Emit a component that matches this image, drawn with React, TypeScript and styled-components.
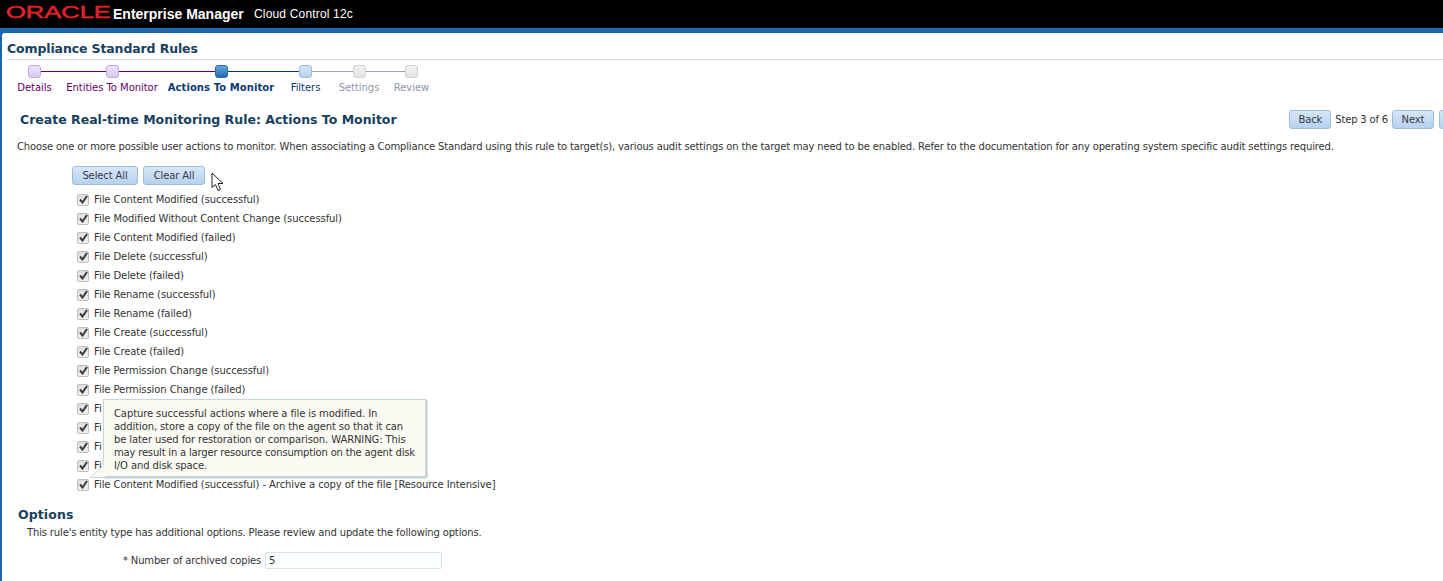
import React from "react";
import styled, { createGlobalStyle } from "styled-components";

const FONT = `"DejaVu Sans", "Noto Sans", sans-serif`;

const Global = createGlobalStyle`
  html, body { margin: 0; padding: 0; background: #fff; overflow: hidden; height: 581px; }
  body { font-family: ${FONT}; font-size: 10px; color: #333; }
`;

const Page = styled.div`
  width: 1443px;
  height: 581px;
  overflow: hidden;
  display: flex;
  flex-direction: column;
`;
const Brand = styled.header`
  height: 28px;
  background: #000;
  display: flex;
  align-items: center;
  padding-left: 6px;
  color: #fff;
  flex: none;
`;
const LogoBox = styled.span`
  width: 107px;
  height: 28px;
  display: flex;
  align-items: center;
  flex: none;
`;
const Logo = styled.span`
  font-family: "Liberation Sans", sans-serif;
  color: #e3202b;
  font-size: 17px;
  line-height: 20px;
  margin-top: -3px;
  transform: scaleX(1.5);
  transform-origin: left center;
  white-space: nowrap;
  -webkit-text-stroke: 0.5px #e3202b;
`;
const Product = styled.span`
  font-family: "Liberation Sans", sans-serif;
  font-weight: 700;
  font-size: 14px;
  width: 141px;
  margin-top: -1px;
`;
const Sub = styled.span`
  font-family: "Liberation Sans", sans-serif;
  font-size: 12px;
  letter-spacing: 0.17px;
  margin-top: -1px;
`;
const Shell = styled.div`
  flex: 1;
  background: #1c66b0;
  padding: 5px 0 0 2px;
  display: flex;
  min-height: 0;
`;
const Panel = styled.main`
  flex: 1;
  background: #fff;
  border-top-left-radius: 3px;
  padding: 0 0 0 5px;
  min-width: 0;
`;
const PageTitle = styled.h1`
  margin: 0;
  height: 24px;
  padding-top: 2px;
  line-height: 27px;
  font-size: 12.5px;
  font-weight: 700;
  letter-spacing: -0.12px;
  color: #17405e;
  border-bottom: 1px solid #d6dde3;
`;
const Train = styled.ol`
  list-style: none;
  margin: 5px 0 0 0;
  padding: 0;
  display: flex;
`;
const Step = styled.li<{ $w: number; $next?: number; $tone: string }>`
  position: relative;
  width: ${(p) => p.$w}px;
  display: flex;
  flex-direction: column;
  align-items: center;
  gap: 3px;
  &::after {
    content: "";
    display: ${(p) => (p.$next ? "block" : "none")};
    position: absolute;
    left: 50%;
    top: 6px;
    height: 1px;
    width: ${(p) => p.$next ?? 0}px;
    background: ${(p) => p.$tone};
  }
`;
const StepBox = styled.span<{ $bg: string; $line: string }>`
  position: relative;
  z-index: 1;
  width: 11px;
  height: 11px;
  border: 1px solid ${(p) => p.$line};
  border-radius: 3px;
  background: ${(p) => p.$bg};
`;
const StepLabel = styled.span<{ $color: string; $bold?: boolean }>`
  color: ${(p) => p.$color};
  font-weight: ${(p) => (p.$bold ? 700 : 400)};
  font-size: 10px;
  line-height: 14px;
  white-space: nowrap;
  letter-spacing: ${(p) => (p.$bold ? "0.08px" : "-0.04px")};
`;
const HeadRow = styled.div`
  display: flex;
  align-items: center;
  margin-top: 12px;
  height: 24px;
  padding-left: 13px;
  width: 1461px;
`;
const SubTitle = styled.h2`
  margin: 0;
  flex: 1;
  font-size: 12.5px;
  font-weight: 700;
  color: #17405e;
`;
const StepOf = styled.span`
  margin: 0 4px 0 4px;
  font-size: 10px;
  letter-spacing: -0.18px;
  color: #333;
`;
const Btn = styled.button<{ $w: number }>`
  width: ${(p) => p.$w}px;
  height: 19px;
  padding: 0;
  border: 1px solid #9ebcd6;
  border-radius: 3px;
  background: linear-gradient(#d6e7f7, #b6d2ee);
  font-family: ${FONT};
  font-size: 10px;
  letter-spacing: -0.12px;
  color: #3a3a4e;
  flex: none;
`;
const Stub = styled(Btn)`
  margin-left: 5px;
`;
const Intro = styled.p`
  margin: 9px 0 0 10px;
  line-height: 14px;
  font-size: 10px;
  letter-spacing: -0.148px;
  white-space: nowrap;
  color: #333;
`;
const Actions = styled.div`
  display: flex;
  gap: 5px;
  margin: 12px 0 0 65px;
  position: relative;
`;
const Cursor = styled.svg`
  position: absolute;
  left: 139px;
  top: 6px;
`;
const List = styled.div`
  position: relative;
  margin: 5px 0 0 70px;
  display: flex;
  flex-direction: column;
`;
const Row = styled.label`
  height: 19px;
  display: flex;
  align-items: center;
  gap: 5px;
  white-space: nowrap;
  letter-spacing: -0.085px;
`;
const Check = styled.span`
  width: 10px;
  height: 10px;
  border: 1px solid #bdbdbd;
  border-radius: 2px;
  background: linear-gradient(#dedede, #f0f0f0);
  display: flex;
  align-items: center;
  justify-content: center;
  flex: none;
`;
const Tip = styled.div`
  position: absolute;
  left: 26px;
  top: 209px;
  width: 303px;
  height: 65px;
  padding: 7px 8px 4px 10px;
  border: 1px solid #c9d6e0;
  background: #fbfbf4;
  box-shadow: 1px 1px 2px #aab4bc;
  font-size: 10px;
  color: #333;
`;
const TipLine = styled.div<{ $tight?: boolean }>`
  line-height: 13px;
  white-space: nowrap;
  letter-spacing: ${(p) => (p.$tight ? "-0.19px" : "-0.11px")};
`;
const TipTail = styled.svg`
  position: absolute;
  left: 13px;
  top: 275px;
`;
const Options = styled.h2`
  margin: 12px 0 0 11px;
  font-size: 12.5px;
  letter-spacing: 0.1px;
  line-height: 18px;
  font-weight: 700;
  color: #17405e;
`;
const OptionsText = styled.p`
  margin: 2px 0 0 20px;
  line-height: 14px;
  letter-spacing: -0.15px;
`;
const Field = styled.div`
  display: flex;
  align-items: center;
  gap: 4px;
  margin: 12px 0 0 116px;
  letter-spacing: -0.17px;
`;
const Input = styled.div`
  width: 172px;
  height: 15px;
  line-height: 15px;
  padding-left: 3px;
  border: 1px solid #d6e2ea;
  border-radius: 2px;
  background: #fbfeff;
`;

const rows = [
  "File Content Modified (successful)",
  "File Modified Without Content Change (successful)",
  "File Content Modified (failed)",
  "File Delete (successful)",
  "File Delete (failed)",
  "File Rename (successful)",
  "File Rename (failed)",
  "File Create (successful)",
  "File Create (failed)",
  "File Permission Change (successful)",
  "File Permission Change (failed)",
  "Fi",
  "Fi",
  "Fi",
  "Fi",
  "File Content Modified (successful) - Archive a copy of the file [Resource Intensive]",
];

const tipLines = [
  { t: "Capture successful actions where a file is modified. In" },
  { t: "addition, store a copy of the file on the agent so that it can" },
  { t: "be later used for restoration or comparison. WARNING: This" },
  { t: "may result in a larger resource consumption on the agent disk", tight: true },
  { t: "I/O and disk space." },
];

const purple = "#660066";
const steps = [
  { t: "Details", w: 55, next: 77, tone: purple, bg: "linear-gradient(#ece3fb,#d8c8f3)", line: "#bda9dd", c: purple },
  { t: "Entities To Monitor", w: 100, next: 109, tone: purple, bg: "linear-gradient(#ece3fb,#d8c8f3)", line: "#bda9dd", c: purple },
  { t: "Actions To Monitor", w: 118, next: 85, tone: "#0b3a75", bg: "linear-gradient(#6aa8dc,#2169ad)", line: "#2a6aa5", c: "#0b3a75", bold: true },
  { t: "Filters", w: 51, next: 53, tone: "#9aa3b5", bg: "linear-gradient(#d3e5f6,#b8d4ef)", line: "#9ebcd6", c: "#0b3a75" },
  { t: "Settings", w: 56, next: 53, tone: "#9aa3b5", bg: "linear-gradient(#f2f2f2,#e3e3e3)", line: "#cfcfcf", c: "#8f98ab" },
  { t: "Review", w: 49, tone: "", bg: "linear-gradient(#f2f2f2,#e3e3e3)", line: "#cfcfcf", c: "#8f98ab" },
];

export default function App() {
  return (
    <Page>
      <Global />
      <Brand>
        <LogoBox>
          <Logo>ORACLE</Logo>
        </LogoBox>
        <Product>Enterprise Manager</Product>
        <Sub>Cloud Control 12c</Sub>
      </Brand>
      <Shell>
        <Panel>
          <PageTitle>Compliance Standard Rules</PageTitle>
          <Train>
            {steps.map((s) => (
              <Step key={s.t} $w={s.w} $next={s.next} $tone={s.tone}>
                <StepBox $bg={s.bg} $line={s.line} />
                <StepLabel $color={s.c} $bold={s.bold}>{s.t}</StepLabel>
              </Step>
            ))}
          </Train>
          <HeadRow>
            <SubTitle>Create Real-time Monitoring Rule: Actions To Monitor</SubTitle>
            <Btn $w={42}>Back</Btn>
            <StepOf>Step 3 of 6</StepOf>
            <Btn $w={42}>Next</Btn>
            <Stub $w={42} />
          </HeadRow>
          <Intro>
            Choose one or more possible user actions to monitor. When associating a Compliance Standard using this rule to target(s), various audit settings on the target may need to be enabled. Refer to the documentation for any operating system specific audit settings required.
          </Intro>
          <Actions>
            <Btn $w={66}>Select All</Btn>
            <Btn $w={62}>Clear All</Btn>
            <Cursor width="13" height="20" viewBox="0 0 13 20">
              <path d="M1 1 L1 15.5 L4.5 12.5 L7 18.5 L9.5 17.5 L7 11.5 L12 11.5 Z" fill="#fff" stroke="#222" strokeWidth="1" />
            </Cursor>
          </Actions>
          <List>
            {rows.map((r, i) => (
              <Row key={i}>
                <Check>
                  <svg width="9" height="9" viewBox="0 0 9 9">
                    <path d="M1 4.5 L3.5 7.5 L8 1" fill="none" stroke="#3c3c3c" strokeWidth="2" />
                  </svg>
                </Check>
                {r}
              </Row>
            ))}
            <Tip>
              {tipLines.map((l) => (
                <TipLine key={l.t} $tight={l.tight}>{l.t}</TipLine>
              ))}
            </Tip>
            <TipTail width="15" height="13" viewBox="0 0 15 13">
              <path d="M0 12.5 L14 0 L15 0 L15 12 Z" fill="#fbfbf4" />
              <path d="M0 12.5 L14 0.5 M0 12.5 L15 12.5" fill="none" stroke="#c9d6e0" />
            </TipTail>
          </List>
          <Options>Options</Options>
          <OptionsText>This rule's entity type has additional options. Please review and update the following options.</OptionsText>
          <Field>
            <span>* Number of archived copies</span>
            <Input>5</Input>
          </Field>
        </Panel>
      </Shell>
    </Page>
  );
}
